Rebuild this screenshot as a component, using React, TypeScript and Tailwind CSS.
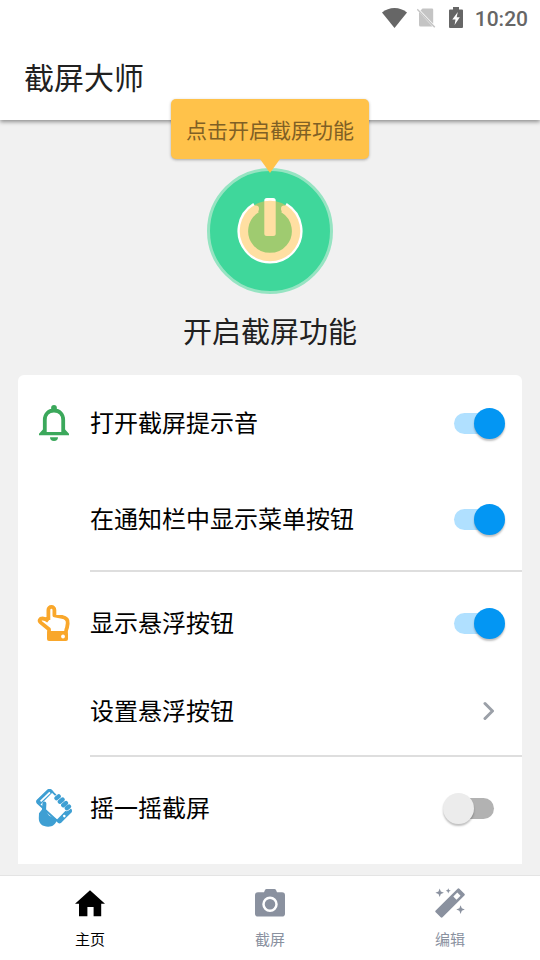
import { useState } from "react";
import type { ReactNode } from "react";

const WifiIcon = () => (
  <svg className="h-5 w-7" viewBox="0 0 28 20" fill="#666" aria-hidden="true">
    <path d="M0 4.500C3.500 1.500 8 0 12.500 0s9 1.500 12.500 4.500L12.500 20Z" />
  </svg>
);

const NoSimIcon = () => (
  <svg className="h-5 w-5" viewBox="0 0 20 20" aria-hidden="true">
    <path d="M5.500 0.500h9.500q1.200 0 1.200 1.200v14L3.500 2.500Z" fill="#c4c4c4" />
    <path d="M2 4L15.500 18.500H3.500q-1.500 0-1.500-1.500Z" fill="#c4c4c4" />
    <path d="M0.200 1.200L17.800 19.200" stroke="#c4c4c4" strokeWidth="1.500" />
  </svg>
);

const BatteryIcon = () => (
  <svg className="h-[22px] w-[14px]" viewBox="0 0 14 22" aria-hidden="true">
    <path d="M4 0h6v2.400h3q1 0 1 1V20q0 1-1 1H1q-1 0-1-1V3.400q0-1 1-1h3Z" fill="#666" />
    <path d="M8.800 5L3.300 12.500h3.200L5.600 18l5.200-7.700H7.700Z" fill="#fff" />
  </svg>
);

const PowerIcon = () => (
  <svg className="size-[70px]" viewBox="-35 -35 70 70" aria-hidden="true">
    <path d="M-14 -23.300A27.200 27.200 0 1 0 14 -23.300" fill="none" stroke="#fff" strokeWidth="10.700" />
    <circle cx="-14.200" cy="-22.300" r="3.200" fill="#fff" />
    <circle cx="14.200" cy="-22.300" r="3.200" fill="#fff" />
    <rect x="-5.700" y="-33" width="11.400" height="38" rx="2.500" fill="#fff" />
    <circle r="30.300" fill="#ffc046" fillOpacity="0.5" />
  </svg>
);

const BellIcon = () => (
  <svg className="size-9" viewBox="0 0 36 36" aria-hidden="true">
    <circle cx="18" cy="2.900" r="2.900" fill="#3ba85b" />
    <path d="M8.800 28V15C8.800 9 12.500 5.500 18 5.500S27.200 9 27.200 15v13" fill="none" stroke="#3ba85b" strokeWidth="3.800" />
    <path d="M6.900 24.500L3 28.800V30.300h30v-1.500l-3.900-4.300-2 2.500H8.900Z" fill="#3ba85b" />
    <path d="M14 32.300h8a4 3.700 0 0 1-8 0Z" fill="#3ba85b" />
  </svg>
);

const HandIcon = () => (
  <svg className="size-9" viewBox="0 0 36 36" aria-hidden="true">
    <path
      d="M12.400 15V4.900a3 3 0 0 1 6 0v5.600l7.600 1.300c4.200.8 6.200 2.800 5.700 6.600l-.7 4.300q-1 2-1.200 5.300H13v-3.700L4.800 17.600C2.500 15.500 3.800 13.500 6.600 13.500q2.800 0 5.800 2.500"
      fill="none"
      stroke="#f9a72b"
      strokeWidth="3.800"
      strokeLinejoin="round"
    />
    <rect x="11" y="26.700" width="21" height="9.300" rx="2" fill="#f9a72b" />
    <circle cx="27" cy="31.500" r="1.900" fill="#fff" />
  </svg>
);

const ShakeIcon = () => (
  <svg className="h-[38px] w-9" viewBox="0 0 36 38" aria-hidden="true">
    <path d="M1.600 12L12.500 1.200q1-1 2 0L34.500 20.500q1 1 0 2L24.500 33q-1 1-2 0L1.600 14Q.600 13 1.600 12Z" fill="#fff" stroke="#3e9fd3" strokeWidth="1.800" />
    <path d="M.600 11L11.500.600q2-1.200 4 0l2 2L4.600 15.500l-3.600-2q-1.200-1.300-.4-2.500Z" fill="#3e9fd3" />
    <path d="M4 11.800L13.300 2.800l1.300 1.100L5.200 13Z" fill="#fff" />
    <path d="M22 29.500L32 19.300l3.500 1.900q.8 1.100 0 2.200L25 33.600q-1.200.9-2.300 0L20.500 31Z" fill="#3e9fd3" />
    <circle cx="28.300" cy="27.100" r="1.300" fill="#fff" />
    <path d="M20.500 9.200l2.200-1.800M23.800 12.700l2.800-2.200M27.200 16.200l2.800-2.200M30.800 19.200l2.200-1.700" stroke="#fff" strokeWidth="5.600" strokeLinecap="round" />
    <path d="M20.500 9.200l2.200-1.800M23.800 12.700l2.800-2.200M27.200 16.200l2.800-2.200M30.800 19.200l2.200-1.700" stroke="#3e9fd3" strokeWidth="4.300" strokeLinecap="round" />
    <path d="M3 24.200L6 20.500l.4-6c.5-3 3.900-2.700 4 .3l-.4 7L13 26.500l8 4c-1 4.600-4.200 7.200-8.800 7.200C6.500 37.700 2.600 34.500 2.800 29Z" fill="#3e9fd3" />
  </svg>
);

const HomeIcon = () => (
  <svg className="size-[30px]" viewBox="0 0 30 30" fill="currentColor" aria-hidden="true">
    <path d="M15 2.300L30 15.800h-3.800v12.400h-7.600V19h-6.200v9.200H4V15.800H0Z" />
  </svg>
);

const CameraIcon = () => (
  <svg className="size-[30px]" viewBox="0 0 30 30" aria-hidden="true">
    <path d="M3 4.200h6L10 2q.4-.9 1.500-.9h8q1 0 1.500.9l1 2.200h5q3 0 3 3v18.500q0 2.800-3 2.800H3q-3 0-3-2.800V7.200q0-3 3-3Z" fill="currentColor" />
    <circle cx="15" cy="16.300" r="6.500" fill="none" stroke="#fff" strokeWidth="2.500" />
  </svg>
);

const WandIcon = () => (
  <svg className="size-[30px]" viewBox="0 0 30 30" fill="currentColor" aria-hidden="true">
    <path d="M22.600.700q.9-.9 1.800 0l5 5q.9.900 0 1.800L7.500 29.300q-.9.900-1.800 0l-5-5q-.9-.9 0-1.800Z" />
    <path d="M18.300 8.600L22.300 4.600l3.200 3.200-4 4Z" fill="#fff" />
    <path d="M4.700.500l1.100 3 3.100 1.300-3.100 1.200-1.100 3.100L3.500 6 .400 4.800l3.100-1.300ZM13.300.300l.7 1.700 1.800.8-1.800.8-.7 1.800-.8-1.800-1.700-.8 1.700-.8ZM25.600 17.300l1.200 3 3 1.300-3 1.200-1.200 3.100-1.200-3.100-3.100-1.200 3.100-1.300Z" />
  </svg>
);

function Row({ icon, tall = true, htmlFor, label, children }: { icon?: ReactNode; tall?: boolean; htmlFor: string; label: string; children: ReactNode }) {
  return (
    <div className={`flex items-center pr-7 ${tall ? "h-24" : "h-20"}`}>
      <span className="flex w-[72px] shrink-0 justify-center">{icon}</span>
      <label htmlFor={htmlFor} className="flex-1 pt-0.5 text-2xl leading-8 text-black">
        {label}
      </label>
      {children}
    </div>
  );
}

function Toggle({ id, on = false }: { id: string; on?: boolean }) {
  const [checked, setChecked] = useState(on);
  return (
    <input
      id={id}
      type="checkbox"
      role="switch"
      checked={checked}
      onChange={(e) => setChecked(e.target.checked)}
      className="relative h-[21px] w-10 appearance-none rounded-full bg-[#b2b2b2] before:absolute before:-top-[5px] before:-left-[11px] before:size-[31px] before:rounded-full before:bg-[#ececec] before:shadow-[0_2px_2px_rgba(0,0,0,0.25)] checked:bg-[#b0e0ff] checked:before:left-5 checked:before:bg-[#0396f3]"
    />
  );
}

const tabs = [
  { label: "主页", icon: <HomeIcon />, active: true },
  { label: "截屏", icon: <CameraIcon />, active: false },
  { label: "编辑", icon: <WandIcon />, active: false },
];

export default function App() {
  return (
    <div className="flex h-screen flex-col bg-[#f1f1f1] font-['Roboto','Noto_Sans_CJK_SC',sans-serif]">
      <header className="shrink-0 bg-white shadow-[0_2px_4px_rgba(0,0,0,0.4)]">
        <div className="flex h-9 items-center justify-end pr-3">
          <div className="flex items-center gap-[7px]">
            <WifiIcon />
            <NoSimIcon />
          </div>
          <div className="ml-3 flex items-center gap-3">
            <BatteryIcon />
            <span className="pt-0.5 text-[21px] leading-6 font-medium text-[#666]">10:20</span>
          </div>
        </div>
        <h1 className="flex h-[84px] items-center px-6 pt-0.5 text-[30px] leading-10 text-[#212121]">截屏大师</h1>
      </header>

      <main className="flex min-h-0 flex-1 flex-col px-[18px] pb-[11px]">
        <section className="relative flex shrink-0 flex-col items-center pt-12">
          <div role="tooltip" className="absolute -top-[21px] z-10 flex flex-col items-center">
            <div className="rounded-[5px] bg-[#ffc24a] px-[15px] pt-[17px] pb-[13px] text-[21px] leading-[30px] text-[#7f6025] shadow-[0_1px_3px_rgba(0,0,0,0.3)]">
              点击开启截屏功能
            </div>
            <svg className="h-[14px] w-5" viewBox="0 0 20 14" fill="#ffc24a" aria-hidden="true">
              <path d="M0 0H20L10 14Z" />
            </svg>
          </div>
          <button
            type="button"
            aria-label="开启截屏功能"
            className="flex size-[126px] items-center justify-center rounded-full border-3 border-[#96e4c2] bg-[#3fd79b]"
          >
            <PowerIcon />
          </button>
          <h2 className="pt-[17px] pb-5 text-[29px] leading-11 text-[#212121]">开启截屏功能</h2>
        </section>

        <section className="min-h-0 flex-1 overflow-hidden rounded-t-md bg-white">
          <div className="pb-[3px]">
            <Row icon={<BellIcon />} htmlFor="sound" label="打开截屏提示音">
              <Toggle id="sound" on />
            </Row>
            <Row htmlFor="notify" label="在通知栏中显示菜单按钮">
              <Toggle id="notify" on />
            </Row>
          </div>
          <hr className="ml-[72px] border-t-2 border-[#dedede]" />
          <div className="pt-[3px] pb-1">
            <Row icon={<HandIcon />} htmlFor="float" label="显示悬浮按钮">
              <Toggle id="float" on />
            </Row>
            <Row htmlFor="float-settings" label="设置悬浮按钮" tall={false}>
              <button id="float-settings" type="button">
                <svg className="h-5 w-3" viewBox="0 0 12 20" fill="none" stroke="#9ba0a8" strokeWidth="3" strokeLinecap="round" aria-hidden="true">
                  <path d="M3 2.500L10.500 10L3 17.500" />
                </svg>
              </button>
            </Row>
          </div>
          <hr className="ml-[72px] border-t-2 border-[#dedede]" />
          <div className="pt-[3px]">
            <Row icon={<ShakeIcon />} htmlFor="shake" label="摇一摇截屏">
              <Toggle id="shake" />
            </Row>
          </div>
        </section>
      </main>

      <nav className="grid shrink-0 grid-cols-3 border-t border-[#e4e4e4] bg-white">
        {tabs.map((tab) => (
          <button
            key={tab.label}
            type="button"
            className={`flex h-[84px] flex-col items-center gap-2.5 pt-3 text-[15px] leading-6 ${tab.active ? "text-black" : "text-[#8a919f]"}`}
          >
            {tab.icon}
            {tab.label}
          </button>
        ))}
      </nav>
    </div>
  );
}
